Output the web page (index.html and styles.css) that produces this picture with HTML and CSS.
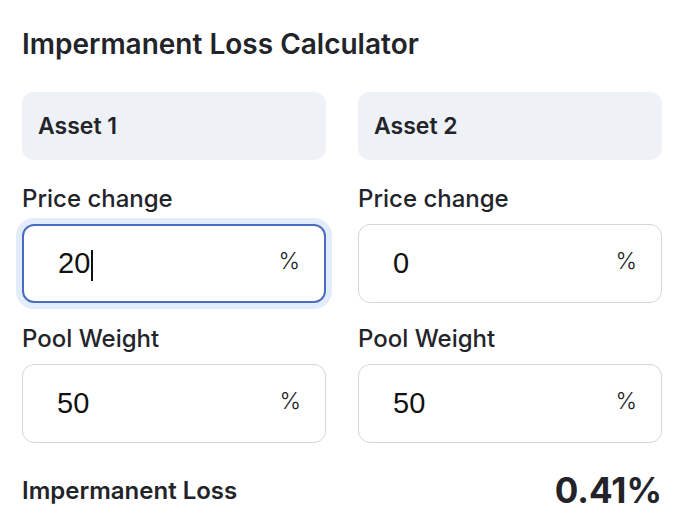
FILE: index.html
```html
<!DOCTYPE html>
<html lang="en">
<head>
<meta charset="utf-8">
<title>Impermanent Loss Calculator</title>
<link rel="stylesheet" href="styles.css">
</head>
<body>
<main class="calc">
  <h1 class="title">Impermanent Loss Calculator</h1>
  <div class="grid">
    <section class="col">
      <div class="asset">Asset 1</div>
      <div class="label first">Price change</div>
      <div class="field focused"><span class="value">20<span class="caret"></span></span><span class="unit">%</span></div>
      <div class="label">Pool Weight</div>
      <div class="field"><span class="value">50</span><span class="unit">%</span></div>
    </section>
    <section class="col">
      <div class="asset">Asset 2</div>
      <div class="label first">Price change</div>
      <div class="field"><span class="value">0</span><span class="unit">%</span></div>
      <div class="label">Pool Weight</div>
      <div class="field"><span class="value">50</span><span class="unit">%</span></div>
    </section>
  </div>
  <div class="result">
    <span class="result-label">Impermanent Loss</span>
    <span class="result-value">0.41%</span>
  </div>
</main>
</body>
</html>
```

FILE: styles.css
```css
* { box-sizing: border-box; }
html, body { margin: 0; padding: 0; background: #ffffff; }
body {
  font-family: "Inter", "Liberation Sans", sans-serif;
  color: #22242a;
  width: 686px;
  height: 532px;
  overflow: hidden;
}
.calc {
  padding: 28px 24px 0 22px;
}
.title {
  margin: 0;
  font-size: 28px;
  line-height: 32px;
  font-weight: 600;
  letter-spacing: 0;
}
.grid {
  margin-top: 32px;
  display: grid;
  grid-template-columns: 1fr 1fr;
  column-gap: 32px;
}
.col {
  display: flex;
  flex-direction: column;
}
.asset {
  height: 68px;
  border-radius: 12px;
  background: #eef1f5;
  display: flex;
  align-items: center;
  padding-left: 16px;
  font-size: 23px;
  font-weight: 600;
}
.label {
  margin-top: 21px;
  font-size: 24px;
  line-height: 30px;
  font-weight: 500;
  height: 40px;
}
.label.first { margin-top: 24px; }
.field {
  height: 79px;
  border: 1.5px solid #d3d6db;
  border-radius: 12px;
  display: flex;
  align-items: center;
  justify-content: space-between;
  padding: 0 24px 0 34px;
  font-family: "Liberation Sans", Arial, sans-serif;
}
.field.focused {
  border: 2px solid #4a6bc2;
  box-shadow: 0 0 0 6px #e3ecfb;
}
.value {
  font-size: 29px;
  color: #111;
  display: inline-flex;
  align-items: center;
}
.caret {
  display: inline-block;
  width: 2px;
  height: 31px;
  background: #111;
  margin-left: 1px;
  margin-top: 4px;
}
.unit {
  font-family: "Inter", sans-serif;
  font-size: 23px;
  font-weight: 300;
  color: #222;
  margin-top: -6px;
}
.result {
  margin-top: 26px;
  display: flex;
  justify-content: space-between;
  align-items: center;
}
.result-label {
  font-size: 24px;
  font-weight: 600;
}
.result-value {
  font-size: 35px;
  font-weight: 700;
  margin-right: 0;
}
```
